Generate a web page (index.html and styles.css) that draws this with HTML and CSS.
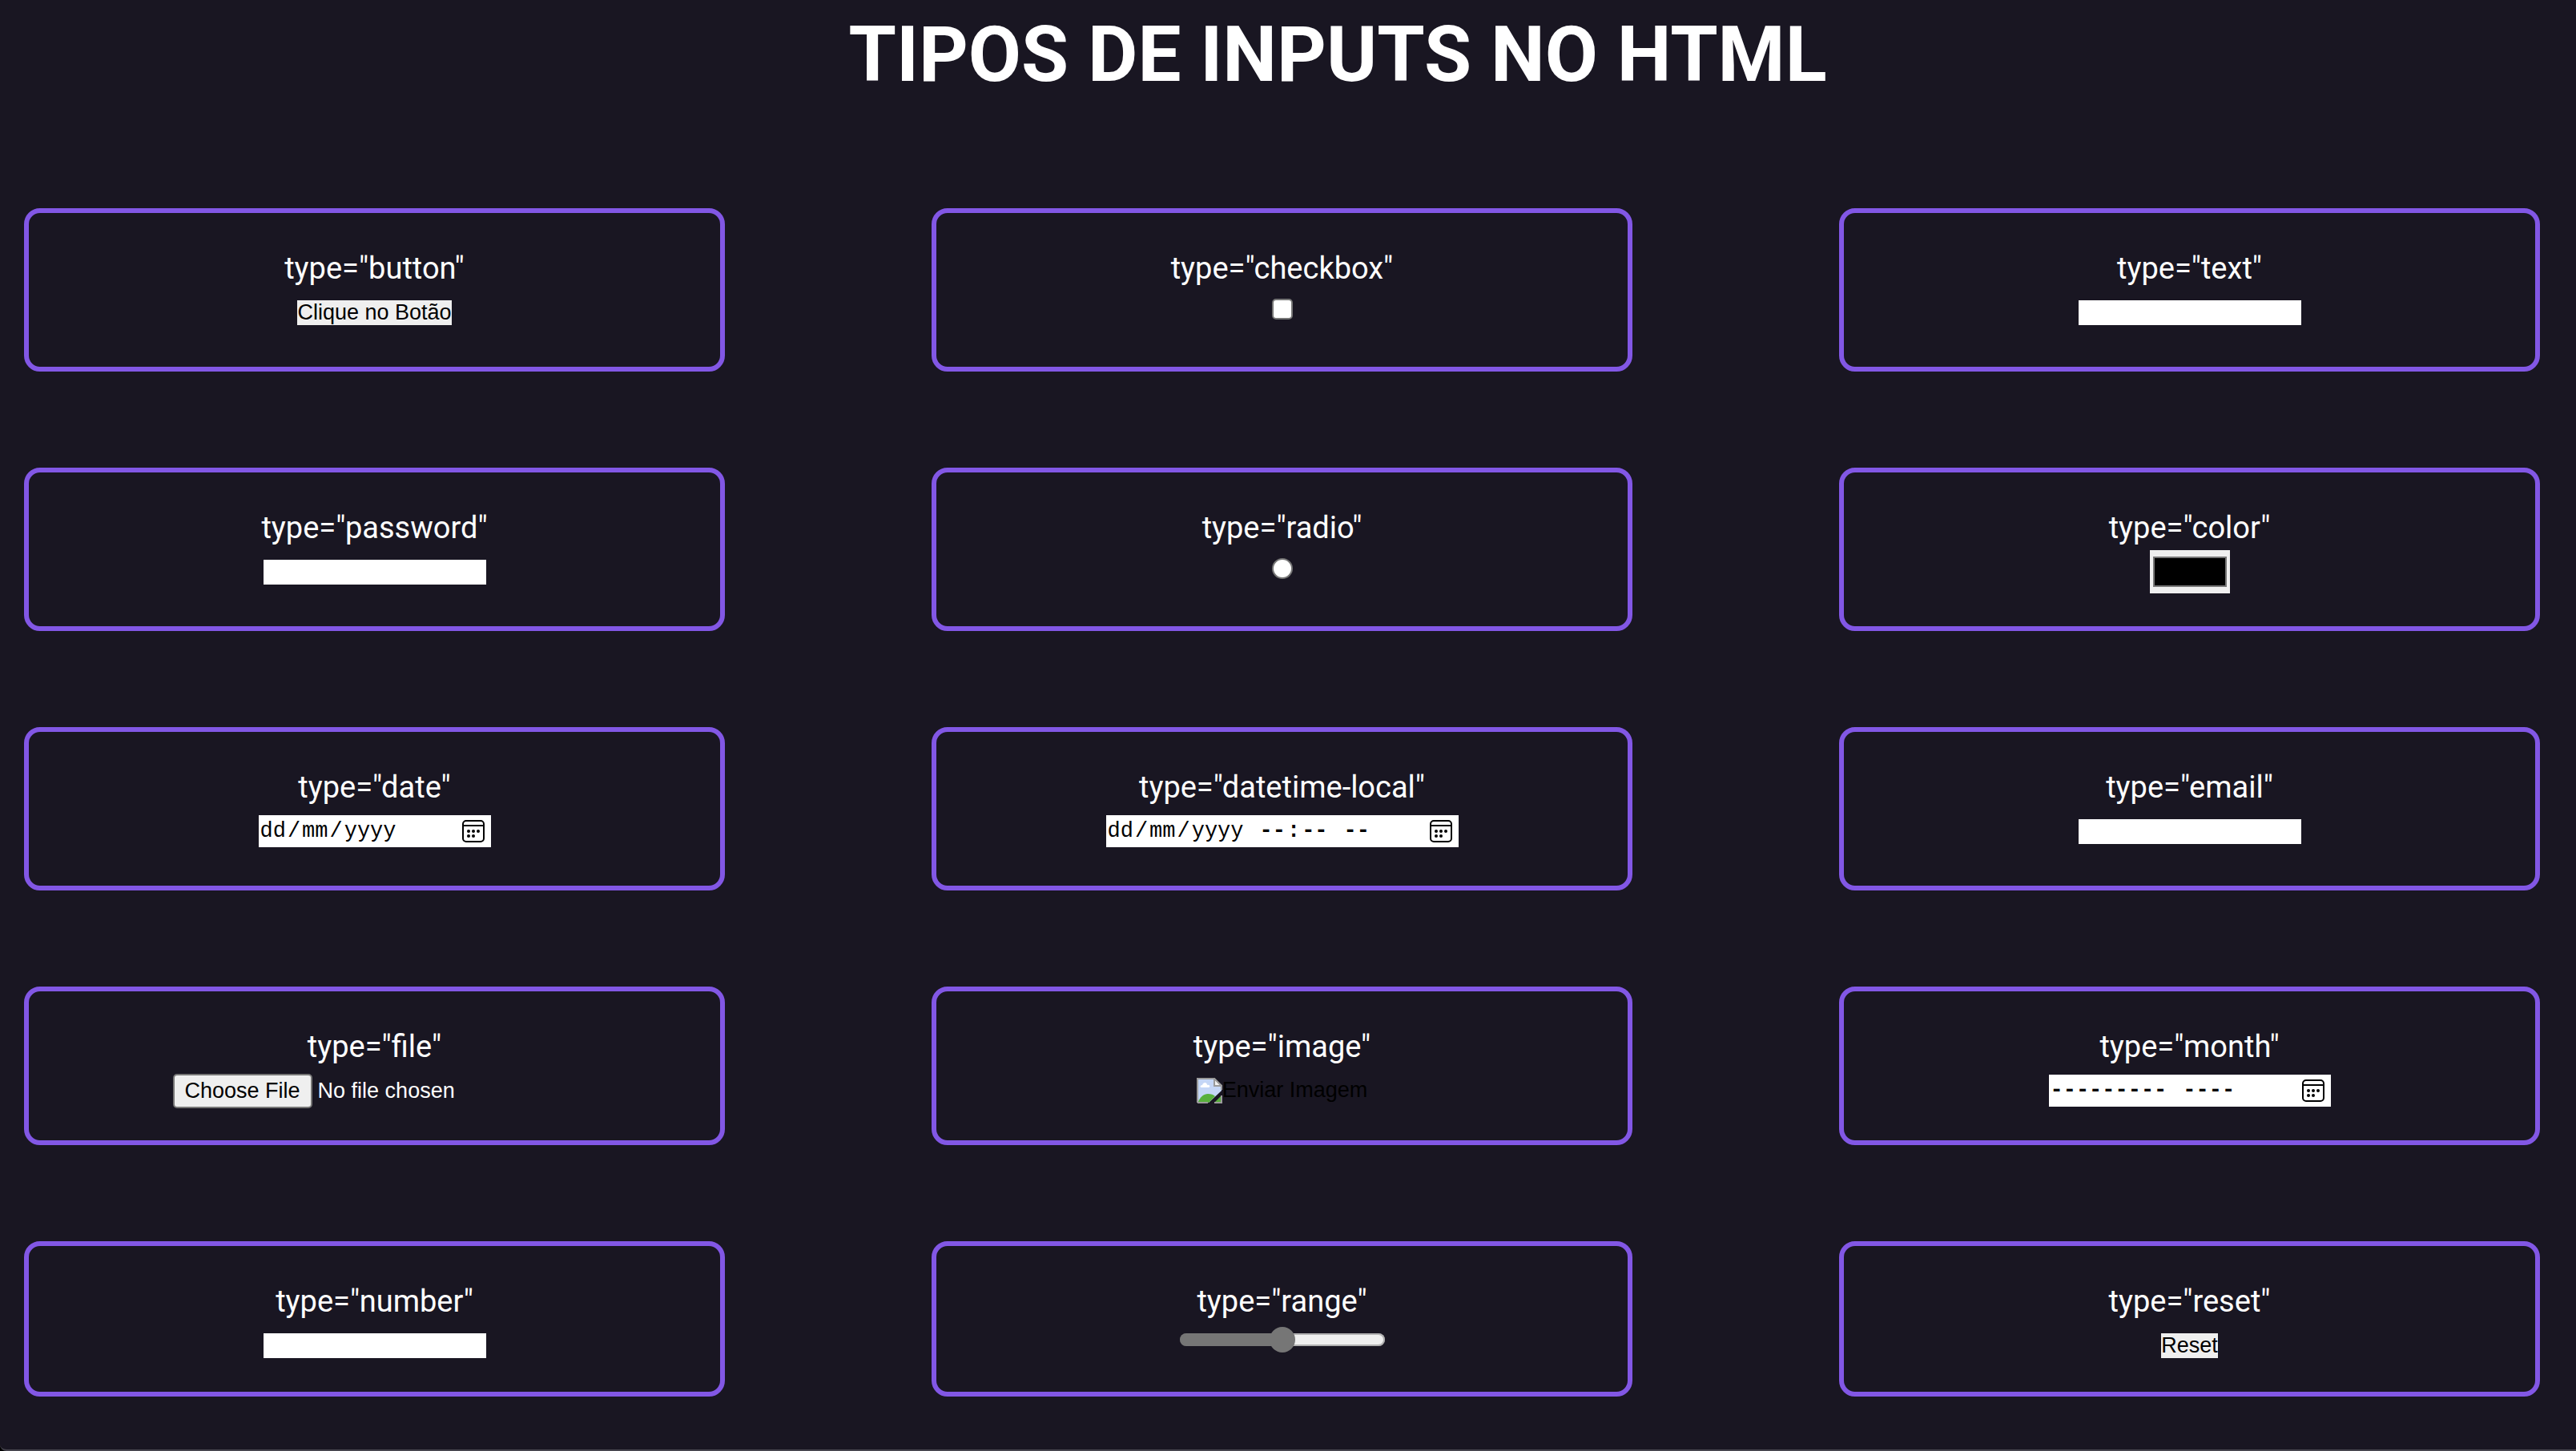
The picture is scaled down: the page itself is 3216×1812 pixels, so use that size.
FILE: index.html
```html
<!DOCTYPE html>
<html lang="pt-BR">
<head>
  <meta charset="UTF-8">
  <meta name="viewport" content="width=device-width, initial-scale=1">
  <title>Tipos de inputs no HTML</title>
  <link rel="stylesheet" href="styles.css">
</head>
<body>
  <svg class="defs" aria-hidden="true">
    <symbol id="calendar" viewBox="0 0 28 28">
      <rect x="1" y="1" width="26" height="26" rx="4" fill="none" stroke="#000" stroke-width="2"/>
      <path d="M1 7h26" stroke="#000" stroke-width="2"/>
      <circle cx="8" cy="14" r="2"/><circle cx="14" cy="14" r="2"/><circle cx="20" cy="14" r="2"/>
      <circle cx="8" cy="20" r="2"/><circle cx="14" cy="20" r="2"/>
    </symbol>
  </svg>
  <div class="page">
    <header class="header"><h1 class="title">TIPOS DE INPUTS NO HTML</h1></header>
    <main class="cards">
      <section class="card">
        <label class="name" for="button">type="button"</label>
        <div class="slot"><button class="push" type="button" id="button">Clique no Botão</button></div>
      </section>
      <section class="card">
        <label class="name" for="checkbox">type="checkbox"</label>
        <div class="slot"><input class="tick" type="checkbox" id="checkbox"></div>
      </section>
      <section class="card">
        <label class="name" for="text">type="text"</label>
        <div class="slot"><input class="field" type="text" id="text"></div>
      </section>

      <section class="card">
        <label class="name" for="password">type="password"</label>
        <div class="slot"><input class="field" type="password" id="password"></div>
      </section>
      <section class="card">
        <label class="name" for="radio">type="radio"</label>
        <div class="slot"><input class="tick tick-round" type="radio" id="radio"></div>
      </section>
      <section class="card">
        <label class="name" for="color">type="color"</label>
        <div class="slot"><input class="color" type="color" id="color" value="#000000"></div>
      </section>

      <section class="card">
        <label class="name" for="date">type="date"</label>
        <div class="slot">
          <div class="picker picker-date">
            <input class="picker-input" type="date" id="date">
            <div class="picker-face" aria-hidden="true">
              <span class="part">dd</span>/<span class="part">mm</span>/<span class="part">yyyy</span>
              <svg class="picker-icon"><use href="#calendar"/></svg>
            </div>
          </div>
        </div>
      </section>
      <section class="card">
        <label class="name" for="datetime">type="datetime-local"</label>
        <div class="slot">
          <div class="picker picker-datetime">
            <input class="picker-input" type="datetime-local" id="datetime">
            <div class="picker-face" aria-hidden="true">
              <span class="part">dd</span>/<span class="part">mm</span>/<span class="part">yyyy</span><span class="space"></span><span class="part blank">--</span><span class="blank">:</span><span class="part blank">--</span><span class="space"></span><span class="part blank">--</span>
              <svg class="picker-icon"><use href="#calendar"/></svg>
            </div>
          </div>
        </div>
      </section>
      <section class="card">
        <label class="name" for="email">type="email"</label>
        <div class="slot"><input class="field" type="email" id="email"></div>
      </section>

      <section class="card">
        <label class="name" for="file">type="file"</label>
        <div class="slot"><input class="file" type="file" id="file"></div>
      </section>
      <section class="card">
        <label class="name" for="image">type="image"</label>
        <div class="slot">
          <button class="image" type="submit" id="image"><svg class="image-icon" viewBox="0 0 32 32" aria-hidden="true">
              <path d="M1 1h21l9 9v6L15 31H1z" fill="#c4d6f6"/>
              <path d="M2 30c2-6 7-10 12-10 4 0 7 1 9 3l-8 8H2z" fill="#58b03c"/>
              <path d="M6 12c-2 0-2-3 1-3 1-4 6-4 6 0 4-1 4 3 2 3z" fill="#fff"/>
              <path d="M1 31V1h21l9 9v5M1 31h13M22 31h9v-9" fill="none" stroke="#9b9b9b" stroke-width="2"/>
              <path d="M22 1v9h9z" fill="#f2f2f2" stroke="#9b9b9b" stroke-width="2"/>
              <path d="M23 30l7-7v7z" fill="#58b03c"/>
            </svg>Enviar Imagem</button>
        </div>
      </section>
      <section class="card">
        <label class="name" for="month">type="month"</label>
        <div class="slot">
          <div class="picker picker-month">
            <input class="picker-input" type="month" id="month">
            <div class="picker-face" aria-hidden="true">
              <span class="part blank">---------</span><span class="space"></span><span class="part blank">----</span>
              <svg class="picker-icon"><use href="#calendar"/></svg>
            </div>
          </div>
        </div>
      </section>

      <section class="card">
        <label class="name" for="number">type="number"</label>
        <div class="slot"><input class="field" type="number" id="number"></div>
      </section>
      <section class="card">
        <label class="name" for="range">type="range"</label>
        <div class="slot"><input class="range" type="range" id="range" min="0" max="100" value="50"></div>
      </section>
      <section class="card">
        <label class="name" for="reset">type="reset"</label>
        <div class="slot"><button class="push" type="reset" id="reset">Reset</button></div>
      </section>
    </main>
  </div>
</body>
</html>
```
FILE: styles.css
```css
* {
  margin: 0;
  padding: 0;
  box-sizing: border-box;
}

html {
  background: #000;
}

body {
  font-family: Roboto, sans-serif;
  color: #fff;
}

.defs {
  display: none;
}

.page {
  min-height: 100vh;
  background: #191622;
  border-bottom: 2px solid #47454e;
  border-bottom-left-radius: 8px;
}

.header {
  padding: 12px 0 136px 124px;
  text-align: center;
}

.title {
  font-size: 96px;
  line-height: 112px;
  font-weight: 700;
}

.cards {
  display: grid;
  grid-template-columns: repeat(3, minmax(0, 1fr));
  grid-template-rows: repeat(3, minmax(204px, auto)) minmax(198px, auto) minmax(194px, auto);
  gap: 120px 258px;
  padding: 0 45px 66px 30px;
}

.card {
  display: flex;
  flex-direction: column;
  align-items: center;
  padding-top: 45px;
  border: 6px solid #8257e5;
  border-radius: 20px;
}

.name {
  font-size: 38px;
  line-height: 48px;
}

.slot {
  display: flex;
  align-items: center;
  height: 62px;
}

.push,
.field,
.file,
.image {
  font-family: "Liberation Sans", Arial, sans-serif;
  font-size: 27px;
  line-height: 31px;
  border: 0;
}

.push {
  background: #efefef;
  color: #000;
}

.field {
  width: 278px;
  height: 31px;
  background: #fff;
}

.tick {
  appearance: none;
  width: 26px;
  height: 26px;
  margin-bottom: 8px;
  background: #fff;
  border: 2px solid #767676;
  border-radius: 5px;
}

.tick-round {
  border-radius: 50%;
}

.color {
  appearance: none;
  width: 100px;
  height: 54px;
  border: 0;
  background: #efefef;
}

.color::-webkit-color-swatch-wrapper {
  padding: 8px 4px;
}

.color::-webkit-color-swatch {
  border: 2px solid #777;
  border-radius: 0;
}

.picker {
  position: relative;
  height: 40px;
  background: #fff;
}

.picker-date {
  width: 290px;
}

.picker-datetime {
  width: 440px;
}

.picker-month {
  width: 352px;
}

.picker-input {
  width: 100%;
  height: 100%;
  border: 0;
  opacity: 0;
}

.picker-face {
  position: absolute;
  inset: 0;
  display: flex;
  align-items: center;
  padding-right: 8px;
  color: #000;
  font-family: "Courier New", "Liberation Mono", monospace;
  font-size: 27px;
  line-height: 40px;
  pointer-events: none;
}

.part {
  padding: 0 2px;
}

.blank {
  font-weight: 700;
}

.space {
  width: 16px;
}

.picker-icon {
  width: 28px;
  height: 28px;
  margin-left: auto;
}

.file {
  width: 504px;
  height: 43px;
  color: #fff;
}

.file::file-selector-button {
  height: 43px;
  margin-right: 7px;
  padding: 0 13px;
  font: inherit;
  color: #000;
  background: #efefef;
  border: 2px solid #767676;
  border-radius: 5px;
}

.image {
  display: flex;
  background: none;
  color: #000;
}

.image-icon {
  width: 32px;
  height: 32px;
}

.range {
  appearance: none;
  width: 256px;
  height: 16px;
  margin-bottom: 14px;
  border-radius: 8px;
  background: linear-gradient(to right, #767676 50%, #efefef 50%);
  box-shadow: inset 0 0 0 2px rgba(118, 118, 118, 0.5);
}

.range::-webkit-slider-thumb {
  appearance: none;
  width: 32px;
  height: 32px;
  border-radius: 50%;
  background: #767676;
}
```
